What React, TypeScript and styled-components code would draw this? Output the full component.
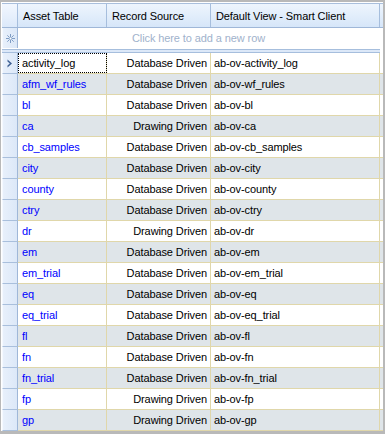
import React from "react";
import styled, { createGlobalStyle } from "styled-components";

const Global = createGlobalStyle`
  html, body { margin: 0; padding: 0; background: #ffffff; }
  body { font-family: Tahoma, "Liberation Sans", Arial, sans-serif; }
`;

const COLS = "16px 89px 104px 169px";

const Frame = styled.div`
  width: 385px;
  height: 434px;
  box-sizing: border-box;
  background: #b9b9b9;
  padding: 2px 2px 3px 1px;
`;

const Inner = styled.div`
  width: 100%;
  height: 100%;
  background: #ffffff;
  box-sizing: border-box;
  padding: 1px 0 0 1px;
  overflow: hidden;
  font-size: 11px;
  letter-spacing: -0.1px;
  color: #000;
`;

const Row = styled.div<{ $h: number; $bg?: string; $line?: string }>`
  display: grid;
  grid-template-columns: ${COLS};
  height: ${(p) => p.$h}px;
  box-sizing: border-box;
  background: ${(p) => p.$bg || "transparent"};
  border-bottom: 1px solid ${(p) => p.$line || "#e0d7aa"};
`;

const HeaderRow = styled(Row)`
  border-top: 1px solid #a9bfdc;
  border-bottom: 1px solid #9fb7d8;
  background: linear-gradient(#eef5fd, #d6e6f9);
`;

const HeadCell = styled.div`
  display: flex;
  align-items: center;
  padding-left: 5px;
  border-right: 1px solid #a6bedd;
  white-space: nowrap;
  overflow: hidden;
`;

const Corner = styled.div`
  border-right: 1px solid #a6bedd;
  background: linear-gradient(#f2f7fe, #dce9fa);
`;

const RowHead = styled.div<{ $plain?: boolean }>`
  box-sizing: border-box;
  border-right: 1px solid #9fb7d8;
  border-left: 1px solid #f5f9ff;
  background: linear-gradient(90deg, #e8f0fb, #dce8f8);
  display: flex;
  align-items: center;
  justify-content: center;
  margin-bottom: ${(p) => (p.$plain ? "0" : "-1px")};
  border-bottom: ${(p) => (p.$plain ? "none" : "1px solid #a9bfdc")};
`;

const NewRowText = styled.div`
  grid-column: 2 / 5;
  display: flex;
  align-items: center;
  justify-content: center;
  color: #9fb2cc;
  border-right: 1px solid #ffffff;
`;

const Separator = styled.div`
  display: grid;
  grid-template-columns: 378px;
  height: 4px;
`;

const SepBar = styled.div`
  border-top: 1px solid #a6bedd;
  border-bottom: 1px solid #a6bedd;
  background: #dce8f8;
  height: 4px;
  box-sizing: border-box;
`;

const Cell = styled.div<{ $align?: string; $link?: boolean; $focus?: boolean }>`
  display: flex;
  align-items: center;
  justify-content: ${(p) => (p.$align === "right" ? "flex-end" : "flex-start")};
  padding: 0 ${(p) => (p.$align === "right" ? "3px" : "0")} 0 ${(p) => (p.$align === "right" ? "0" : "3px")};
  border-right: 1px solid #e0d7aa;
  color: ${(p) => (p.$link ? "#0000ff" : "#000000")};
  white-space: nowrap;
  overflow: hidden;
  box-sizing: border-box;
  ${(p) => (p.$focus ? "outline: 1px dotted #000; outline-offset: -1px; background: #fff;" : "")}
`;

const NameCell = styled(Cell)`
  padding-left: 4px;
`;

const rows: [string, string, string][] = [
  ["activity_log", "Database Driven", "ab-ov-activity_log"],
  ["afm_wf_rules", "Database Driven", "ab-ov-wf_rules"],
  ["bl", "Database Driven", "ab-ov-bl"],
  ["ca", "Drawing Driven", "ab-ov-ca"],
  ["cb_samples", "Database Driven", "ab-ov-cb_samples"],
  ["city", "Database Driven", "ab-ov-city"],
  ["county", "Database Driven", "ab-ov-county"],
  ["ctry", "Database Driven", "ab-ov-ctry"],
  ["dr", "Drawing Driven", "ab-ov-dr"],
  ["em", "Database Driven", "ab-ov-em"],
  ["em_trial", "Database Driven", "ab-ov-em_trial"],
  ["eq", "Database Driven", "ab-ov-eq"],
  ["eq_trial", "Database Driven", "ab-ov-eq_trial"],
  ["fl", "Database Driven", "ab-ov-fl"],
  ["fn", "Database Driven", "ab-ov-fn"],
  ["fn_trial", "Database Driven", "ab-ov-fn_trial"],
  ["fp", "Drawing Driven", "ab-ov-fp"],
  ["gp", "Drawing Driven", "ab-ov-gp"],
];

const Star = () => (
  <svg width="9" height="9" viewBox="0 0 9 9">
    <g stroke="#7e9cc4" strokeWidth="1">
      <line x1="4.5" y1="0" x2="4.5" y2="9" />
      <line x1="0" y1="4.5" x2="9" y2="4.5" />
      <line x1="1.3" y1="1.3" x2="7.7" y2="7.7" />
      <line x1="7.7" y1="1.3" x2="1.3" y2="7.7" />
    </g>
    <rect x="3.5" y="3.5" width="2" height="2" fill="#ffffff" />
  </svg>
);

const Arrow = () => (
  <svg width="6" height="9" viewBox="0 0 6 9">
    <path d="M0.5 0.5 L5 4.5 L0.5 8.5 L0.5 6.5 L2.8 4.5 L0.5 2.5 Z" fill="#3d5f93" />
  </svg>
);

export default function App() {
  return (
    <>
      <Global />
      <Frame>
        <Inner>
          <HeaderRow $h={25}>
            <Corner />
            <HeadCell>Asset Table</HeadCell>
            <HeadCell>Record Source</HeadCell>
            <HeadCell>Default View - Smart Client</HeadCell>
          </HeaderRow>
          <Row $h={21} $line="#ffffff">
            <RowHead $plain>
              <Star />
            </RowHead>
            <NewRowText>Click here to add a new row</NewRowText>
          </Row>
          <Separator>
            <SepBar />
          </Separator>
          {rows.map((r, i) => (
            <Row key={r[0]} $h={21} $bg={i % 2 === 0 ? "#ffffff" : "#dfe5e9"}>
              <RowHead>{i === 0 ? <Arrow /> : null}</RowHead>
              <NameCell $link={i !== 0} $focus={i === 0}>
                {r[0]}
              </NameCell>
              <Cell $align="right">{r[1]}</Cell>
              <Cell>{r[2]}</Cell>
            </Row>
          ))}
        </Inner>
      </Frame>
    </>
  );
}
